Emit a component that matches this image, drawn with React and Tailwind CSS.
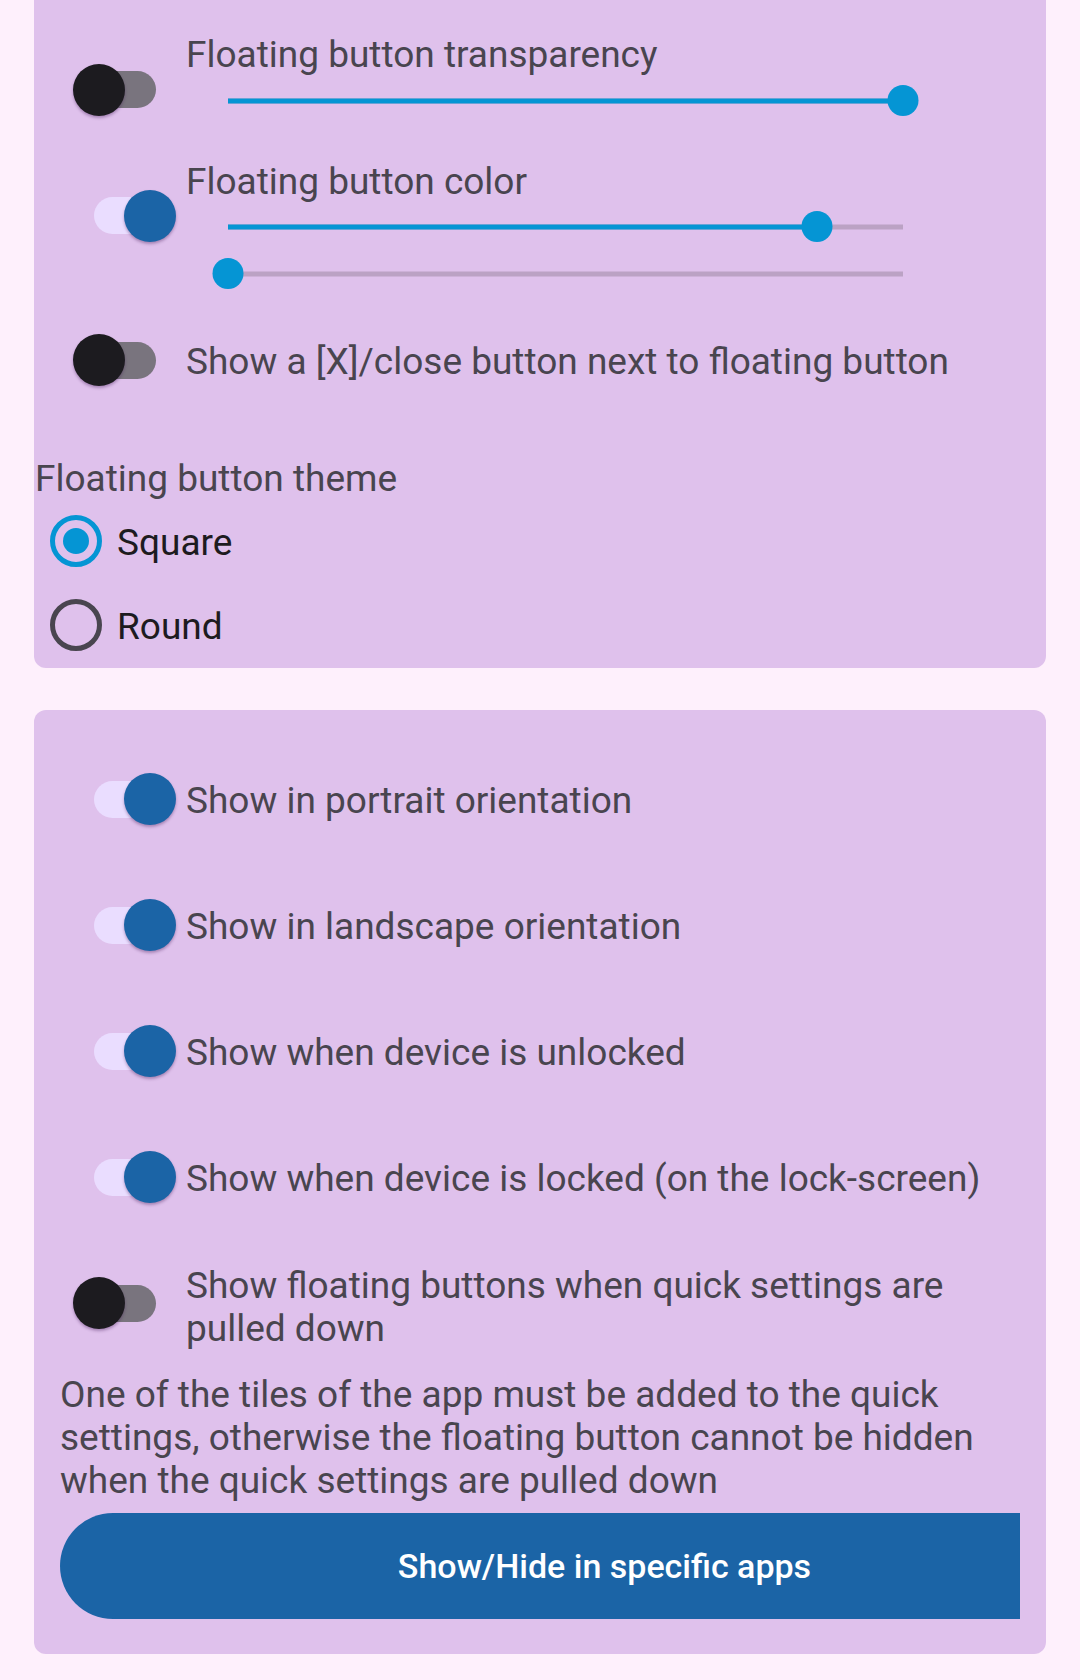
import React from 'react';

const TEXT = 'text-[37px] text-[#49454f] translate-y-[2px]';

function Toggle({ on }) {
    return (
        <div className={`relative w-[62px] h-[37px] rounded-full ${on ? 'bg-[#eaddff]' : 'bg-[#79747e]'}`}>
            <div
                className={`absolute top-1/2 -translate-y-1/2 w-[52px] h-[52px] rounded-full shadow-[0_2px_3px_rgba(60,20,80,0.35)] ${on ? 'left-[30px] bg-[#1b64a6]' : 'left-[-21px] bg-[#1c1b1f]'}`}
            />
        </div>
    );
}

function Slider({ value }) {
    return (
        <div className="relative w-[675px] h-[31px] ml-[42px]">
            <div className="absolute left-0 right-0 top-1/2 -translate-y-1/2 h-[5px] bg-[#bba2c4]" />
            <div className="absolute left-0 top-1/2 -translate-y-1/2 h-[5px] bg-[#0595d4]" style={{ width: `${value * 100}%` }} />
            <div className="absolute top-0 w-[31px] h-[31px] rounded-full bg-[#0595d4] -translate-x-1/2" style={{ left: `${value * 100}%` }} />
        </div>
    );
}

function Radio({ checked, label }) {
    return (
        <div className="h-[84px] flex items-center pl-[16px] gap-[15px]">
            <div className={`w-[52px] h-[52px] rounded-full border-[5px] flex items-center justify-center ${checked ? 'border-[#0595d4]' : 'border-[#49454f]'}`}>
                {checked && <div className="w-[26px] h-[26px] rounded-full bg-[#0595d4]" />}
            </div>
            <span className="text-[37px] leading-[44px] text-[#1d1b20] translate-y-[2px]">{label}</span>
        </div>
    );
}

function ToggleCol({ on, className = '' }) {
    return (
        <div className={`w-[152px] pl-[60px] shrink-0 ${className}`}>
            <Toggle on={on} />
        </div>
    );
}

function ToggleRow({ on, label }) {
    return (
        <div className="h-[126px] flex items-center">
            <ToggleCol on={on} />
            <p className={`flex-1 pr-[26px] leading-[44px] ${TEXT}`}>{label}</p>
        </div>
    );
}

export default function App() {
    return (
        <div className="min-h-screen bg-[#fef0fc] pb-[26px]" style={{ fontFamily: 'Roboto, "Noto Sans", sans-serif' }}>
            {/* Floating button card */}
            <div className="ml-[34px] w-[1012px] h-[668px] bg-[#dfc1ec] rounded-b-[12px]">
                {/* Transparency */}
                <div className="flex items-start">
                    <ToggleCol on={false} className="pt-[71px]" />
                    <div className="pt-[31px]">
                        <p className={`leading-[44px] ${TEXT}`}>Floating button transparency</p>
                        <div className="mt-[10px]">
                            <Slider value={1} />
                        </div>
                    </div>
                </div>

                {/* Color */}
                <div className="flex items-start">
                    <ToggleCol on className="pt-[81px]" />
                    <div className="pt-[42px]">
                        <p className={`leading-[44px] ${TEXT}`}>Floating button color</p>
                        <div className="mt-[9px]">
                            <Slider value={0.872} />
                        </div>
                        <div className="mt-[16px]">
                            <Slider value={0} />
                        </div>
                    </div>
                </div>

                {/* Close button */}
                <div className="mt-[49px] h-[44px] flex items-center">
                    <ToggleCol on={false} />
                    <p className={`leading-[44px] ${TEXT}`}>Show a [X]/close button next to floating button</p>
                </div>

                {/* Theme */}
                <p className={`mt-[73px] pl-[1px] leading-[44px] ${TEXT}`}>Floating button theme</p>
                <Radio checked label="Square" />
                <Radio checked={false} label="Round" />
            </div>

            {/* Visibility card */}
            <div className="mt-[42px] ml-[34px] w-[1012px] bg-[#dfc1ec] rounded-[12px] pt-[26px] pb-[35px]">
                <ToggleRow on label="Show in portrait orientation" />
                <ToggleRow on label="Show in landscape orientation" />
                <ToggleRow on label="Show when device is unlocked" />
                <ToggleRow on label="Show when device is locked (on the lock-screen)" />
                <div className="h-[126px] flex items-center">
                    <ToggleCol on={false} />
                    <p className={`flex-1 pr-[26px] mt-[4px] leading-[43px] ${TEXT}`}>
                        Show floating buttons when quick settings are pulled down
                    </p>
                </div>

                <div className="px-[26px]">
                    <p className={`mt-[5px] leading-[43px] ${TEXT}`}>
                        One of the tiles of the app must be added to the quick settings, otherwise the floating button cannot be hidden when the quick settings are pulled down
                    </p>
                    <div className="mt-[13px] overflow-hidden">
                        <button className="w-[1089px] max-w-none h-[106px] rounded-l-full bg-[#1b64a6] text-white text-[34px] font-medium flex items-center justify-center">
                            Show/Hide in specific apps
                        </button>
                    </div>
                </div>
            </div>
        </div>
    );
}
